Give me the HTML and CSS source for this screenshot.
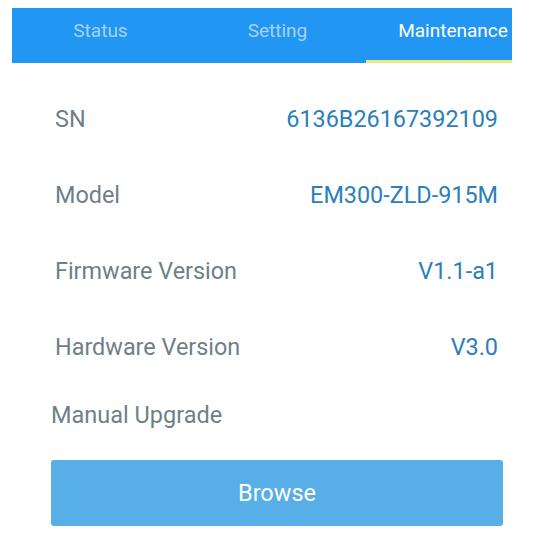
FILE: index.html
```html
<!DOCTYPE html>
<html>
<head>
<meta charset="utf-8">
<link rel="stylesheet" href="styles.css">
</head>
<body>
<div class="tabs">
  <div class="tab">Status</div>
  <div class="tab">Setting</div>
  <div class="tab active">Maintenance</div>
</div>
<div class="info">
  <div class="row"><span class="label">SN</span><span class="value">6136B26167392109</span></div>
  <div class="row"><span class="label">Model</span><span class="value">EM300-ZLD-915M</span></div>
  <div class="row"><span class="label">Firmware Version</span><span class="value">V1.1-a1</span></div>
  <div class="row"><span class="label">Hardware Version</span><span class="value">V3.0</span></div>
</div>
<div class="upgrade">
  <div class="upgrade-title">Manual Upgrade</div>
  <button class="browse">Browse</button>
</div>
</body>
</html>
```
FILE: styles.css
```css
html, body {
  margin: 0;
  padding: 0;
  background: #ffffff;
  font-family: Roboto, "Noto Sans", sans-serif;
}
.tabs {
  margin: 8px 0 0 12px;
  width: 500px;
  height: 55px;
  background: #2196f3;
  display: flex;
  overflow: hidden;
}
.tab {
  flex: 0 0 177px;
  box-sizing: border-box;
  height: 55px;
  display: flex;
  align-items: center;
  justify-content: center;
  padding-bottom: 11px;
  font-size: 19px;
  color: #a9d2f7;
}
.tab.active {
  color: #ffffff;
  border-bottom: 3px solid #ede97a;
  padding-bottom: 8px;
  padding-right: 3px;
}
.info {
  margin-top: 18px;
  padding: 0 55px;
}
.row {
  height: 76px;
  display: flex;
  align-items: center;
  justify-content: space-between;
}
.label {
  font-size: 23.4px;
  color: #6f7f87;
}
.value {
  font-size: 23.4px;
  color: #2b80ba;
}
.upgrade {
  padding: 0 50px 0 51px;
}
.upgrade-title {
  font-size: 23.5px;
  color: #6f7f87;
  height: 60px;
  display: flex;
  align-items: center;
}
.browse {
  display: block;
  margin-top: 15px;
  width: 452px;
  height: 66px;
  border: none;
  border-radius: 3px;
  background: #58aee6;
  color: #ffffff;
  font-family: Roboto, "Noto Sans", sans-serif;
  font-size: 23.5px;
  padding: 0;
}
```
